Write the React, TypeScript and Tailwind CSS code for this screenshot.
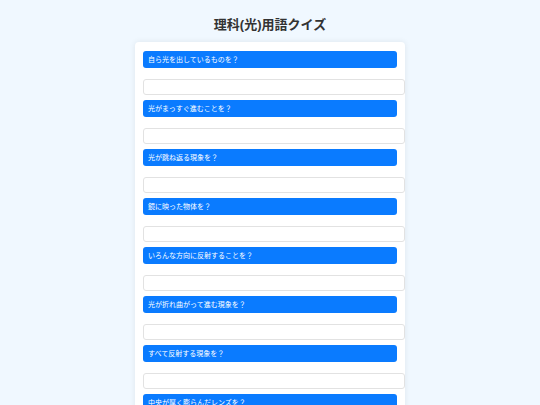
const QUESTIONS = [
  '自ら光を出しているものを？',
  '光がまっすぐ進むことを？',
  '光が跳ね返る現象を？',
  '鏡に映った物体を？',
  'いろんな方向に反射することを？',
  '光が折れ曲がって進む現象を？',
  'すべて反射する現象を？',
  '中央が厚く膨らんだレンズを？',
  '凸レンズを通った光が集まる点を？',
  '焦点からレンズの中心までの距離を？',
];

export default function App() {
  return (
    <div
      className="min-h-screen bg-[#f0f8ff] flex flex-col items-center"
      style={{ fontFamily: '"Liberation Sans", "Noto Sans CJK JP", sans-serif' }}
    >
      <h1 className="mt-[15px] h-[19px] leading-[19px] text-[13px] font-bold text-[#333333]">
        理科(光)用語クイズ
      </h1>
      <div className="mt-[8px] w-[270px] bg-white rounded-[4px] shadow-[0_0_6px_rgba(0,0,0,0.08)] px-[8px] pt-[9px] pb-[8px]">
        {QUESTIONS.map((q) => (
          <div key={q} className="flex flex-col">
            <div className="h-[17px] flex items-center px-[5px] bg-[#0a7bff] rounded-[3px] text-white text-[7px] leading-none">
              {q}
            </div>
            <input
              type="text"
              className="mt-[11px] mb-[5px] w-[262px] h-[16px] bg-white border border-[#e2e2e2] rounded-[3px] outline-none text-[7px] px-[4px]"
            />
          </div>
        ))}
      </div>
    </div>
  );
}
